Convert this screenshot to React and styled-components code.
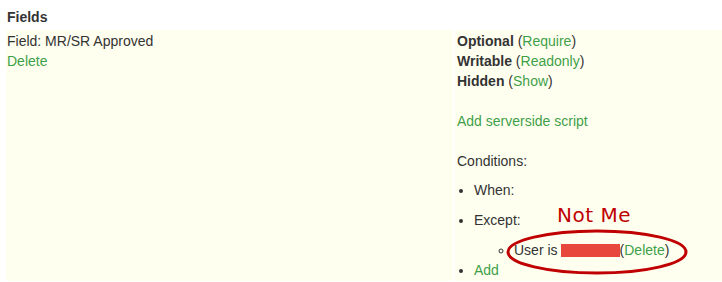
import React from "react"
import styled, { createGlobalStyle } from "styled-components"

const GlobalStyle = createGlobalStyle`
  body {
    margin: 0;
    background: #fff;
    font-family: "Liberation Sans", Arial, sans-serif;
    font-size: 14px;
    color: #333;
  }
`

const Page = styled.div`
  position: relative;
  width: 722px;
  height: 282px;
  overflow: hidden;
  padding-left: 6px;
  box-sizing: border-box;
`

const Heading = styled.h4`
  margin: 0;
  height: 30px;
  line-height: 34px;
  padding-left: 1px;
  font-size: 14px;
  font-weight: bold;
  color: #333;
`

const Row = styled.div`
  display: flex;
  gap: 2px;
  height: 251px;
`

const Cell = styled.div`
  flex: ${(p) => (p.$width ? `0 0 ${p.$width}px` : "1")};
  background: #fffff0;
  padding: 1px 0 0 ${(p) => p.$pad || 1}px;
  box-sizing: border-box;
  line-height: 20px;
`

const Link = styled.a`
  color: #3f9f49;
  text-decoration: none;
  cursor: pointer;
`

const Line = styled.div`
  margin-top: ${(p) => p.$top || 0}px;
  margin-bottom: ${(p) => p.$gap || 0}px;
`

const List = styled.ul`
  margin: 0;
  padding-left: ${(p) => p.$indent}px;
  list-style: ${(p) => p.$kind};
`

const Item = styled.li`
  margin-top: ${(p) => p.$top || 0}px;
`

const Redacted = styled.span`
  display: inline-block;
  width: 59px;
  height: 13px;
  background: #e8473d;
  vertical-align: -2px;
  margin-left: 3px;
`

const Note = styled.div`
  position: absolute;
  left: 557px;
  top: 203px;
  font-family: "DejaVu Sans", sans-serif;
  font-size: 20px;
  color: #c00000;
  letter-spacing: 0.5px;
`

const Ring = styled.svg`
  position: absolute;
  left: 505px;
  top: 228px;
  pointer-events: none;
`

export default function App() {
  return (
    <>
      <GlobalStyle />
      <Page>
        <Heading>Fields</Heading>
        <Row>
          <Cell $width={447}>
            <Line>Field: MR/SR Approved</Line>
            <Line>
              <Link>Delete</Link>
            </Line>
          </Cell>
          <Cell $pad={2}>
            <Line>
              <b>Optional</b> (<Link>Require</Link>)
            </Line>
            <Line>
              <b>Writable</b> (<Link>Readonly</Link>)
            </Line>
            <Line $gap={20}>
              <b>Hidden</b> (<Link>Show</Link>)
            </Line>
            <Line $gap={20}>
              <Link>Add serverside script</Link>
            </Line>
            <Line $top={1}>Conditions:</Line>
            <List $indent={17} $kind="disc">
              <Item $top={9}>When:</Item>
              <Item $top={10}>
                Except:
                <List $indent={40} $kind="circle">
                  <Item $top={10}>
                    User is<Redacted />(<Link>Delete</Link>)
                  </Item>
                </List>
              </Item>
              <Item>
                <Link>Add</Link>
              </Item>
            </List>
          </Cell>
        </Row>
        <Note>Not Me</Note>
        <Ring width="186" height="50" viewBox="0 0 186 50">
          <ellipse cx="92" cy="24" rx="89" ry="21" fill="none" stroke="#c00000" strokeWidth="3" />
        </Ring>
      </Page>
    </>
  )
}
